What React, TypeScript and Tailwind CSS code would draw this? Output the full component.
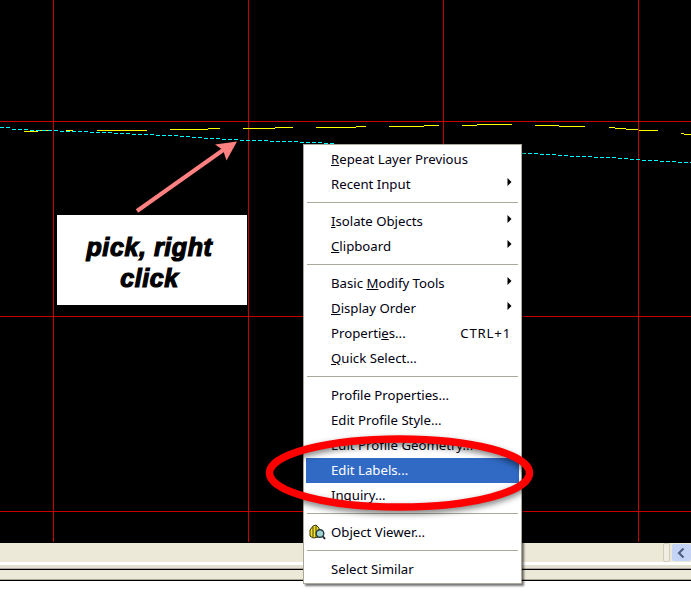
import React from "react";

const yellow: [number, number, number][] = [
  [24,38,131],[38,49,130],[66,73,130],[97,147,130],[170,208,129],[208,220,128],[243,275,128],[275,293,127],
  [316,356,127],[356,366,126],[389,424,126],[424,439,125],[462,477,125],[477,512,124],[535,559,125],[559,585,126],
  [609,615,127],[615,626,128],[626,638,129],[639,658,130],[681,684,133],[684,691,134],
];

const cyanPts: [number, number][] = [
  [0,127],[6,127],[8,129],[45,130],[75,131],[120,133],[185,136],[188,137],[250,140],[310,142],[327,143],[360,145],
  [522,153],[548,154],[570,156],[607,157],[632,159],[665,161],[691,162],
];
function cyanAt(x: number) {
  for (let i = 1; i < cyanPts.length; i++) {
    const [a, ya] = cyanPts[i - 1];
    const [b, yb] = cyanPts[i];
    if (x <= b) return Math.round(ya + ((yb - ya) * (x - a)) / (b - a));
  }
  return 162;
}
const cyanDashes: [number, number][] = [];
for (let x = 0; x < 691; x += 6) cyanDashes.push([x, cyanAt(x)]);

function Item({ children, arrow, shortcut, active, icon }: { children: React.ReactNode; arrow?: boolean; shortcut?: string; active?: boolean; icon?: React.ReactNode }) {
  return (
    <div className={`relative mx-[2px] flex h-[25px] items-center pl-[25px] pr-[8px] ${active ? "bg-[#316ac5] text-white" : "text-[#000010]"}`}>
      {icon}
      <span className="flex-1 whitespace-nowrap pt-[1px]">{children}</span>
      {shortcut && <span className="pt-[1px] tracking-[0.8px]">{shortcut}</span>}
      {arrow && (
        <svg width="5" height="8" viewBox="0 0 5 8" className="mb-[5px] mr-[-1px]">
          <path d="M0.5 0 L4.5 4 L0.5 8 Z" fill="#000" />
        </svg>
      )}
    </div>
  );
}

function Sep() {
  return (
    <div className="h-[12px] px-[3px] pt-[5px]">
      <div className="h-px bg-[#aca899]" />
    </div>
  );
}

export default function App() {
  return (
    <div className="relative h-[615px] w-[691px] overflow-hidden bg-white">
      <div className="relative h-[543px] bg-black">
        <svg width="691" height="543" className="block">
          <g stroke="#c80000" strokeWidth="1" shapeRendering="crispEdges">
            <line x1="53.5" y1="0" x2="53.5" y2="542" />
            <line x1="248.5" y1="0" x2="248.5" y2="542" />
            <line x1="443.5" y1="0" x2="443.5" y2="542" />
            <line x1="638.5" y1="0" x2="638.5" y2="542" />
            <line x1="0" y1="121.5" x2="691" y2="121.5" />
            <line x1="0" y1="316.5" x2="691" y2="316.5" />
            <line x1="0" y1="511.5" x2="691" y2="511.5" />
          </g>
          <g stroke="#ffff00" strokeWidth="1" shapeRendering="crispEdges">
            {yellow.map(([a, b, y], i) => (
              <line key={i} x1={a} x2={b} y1={y + 0.5} y2={y + 0.5} />
            ))}
          </g>
          <g stroke="#00ffff" strokeWidth="1" shapeRendering="crispEdges">
            {cyanDashes.map(([x, y], i) => (
              <line key={i} x1={x} x2={x + 4} y1={y + 0.5} y2={y + 0.5} />
            ))}
          </g>
        </svg>
      </div>

      <div className="relative h-[19px] bg-[#ece9d8]">
        <div className="absolute left-[663px] top-0 h-[19px] w-[7px] rounded-[2px] border border-[#cfccb8] bg-[#f0eee2]" />
        <div className="absolute left-[672px] top-px flex h-[17px] w-[19px] items-center justify-center rounded-[2px] bg-[#c3d4f7]">
          <svg width="9" height="10" viewBox="0 0 9 10">
            <path d="M6.5 0.5 L2 5 L6.5 9.5" fill="none" stroke="#4d6185" strokeWidth="2.2" />
          </svg>
        </div>
      </div>
      <div className="h-[3px] bg-white" />
      <div className="h-[3px] bg-[#e4e1d2]" />
      <div className="h-px bg-[#aca899]" />
      <div className="h-px bg-black" />
      <div className="h-[9px] bg-[#ece9d8]" />
      <div className="h-px bg-[#aca899]" />
      <div className="h-px bg-black" />

      <div className="absolute left-[57px] top-[215px] flex h-[90px] w-[190px] items-center justify-center bg-white pr-[5px] text-center font-['Liberation_Sans',sans-serif] text-[25px] font-bold italic leading-[31px] tracking-[0.6px] text-black [-webkit-text-stroke:1.2px_black]">
        <div className="w-[150px] pt-[6px]">pick, right click</div>
      </div>

      <svg width="691" height="615" className="pointer-events-none absolute left-0 top-0">
        <path d="M137 211 L226 148" stroke="#ff8080" strokeWidth="4" fill="none" />
        <path d="M237 141.5 L215 144.5 L223 150 L226.5 160.5 Z" fill="#ff8080" />
      </svg>

      <div className="absolute left-[303px] top-[144px] h-[440px] w-[219px] border border-[#aca899] bg-white pt-[2px] font-['Noto_Sans',sans-serif] text-[13.2px] shadow-[2px_2px_2px_rgba(0,0,0,0.55)]">
        <Item><u>R</u>epeat Layer Previous</Item>
        <Item arrow>Recent Input</Item>
        <Sep />
        <Item arrow><u>I</u>solate Objects</Item>
        <Item arrow><u>C</u>lipboard</Item>
        <Sep />
        <Item arrow>Basic <u>M</u>odify Tools</Item>
        <Item arrow><u>D</u>isplay Order</Item>
        <Item shortcut="CTRL+1">Properti<u>e</u>s...</Item>
        <Item><u>Q</u>uick Select...</Item>
        <Sep />
        <Item>Profile Properties...</Item>
        <Item>Edit Profile Style...</Item>
        <Item>Edit Profile Geometry...</Item>
        <Item active>Edit Labels...</Item>
        <Item>Inquiry...</Item>
        <Sep />
        <Item
          icon={
            <svg width="17" height="17" viewBox="0 0 17 17" className="absolute left-[3px] top-[4px]">
              <path d="M1 12 L1 6 L4 2 L7 1 L10 4 L10 13 L4 14 Z" fill="#f2e02a" stroke="#33330a" strokeWidth="1" />
              <path d="M4 3 L4 13 M7 2 L7 13" stroke="#4a4510" strokeWidth="1" fill="none" />
              <circle cx="11" cy="9.5" r="3.8" fill="#9fd0cc" stroke="#1f3a44" strokeWidth="1.4" />
              <path d="M14 12.5 L16 15" stroke="#222" strokeWidth="2" />
            </svg>
          }
        >
          Object Viewer...
        </Item>
        <Sep />
        <Item>Select Similar</Item>
      </div>

      <svg width="691" height="615" className="pointer-events-none absolute left-0 top-0">
        <ellipse cx="399.5" cy="476" rx="130" ry="34" fill="none" stroke="#000" strokeOpacity="0.55" strokeWidth="7" style={{ filter: "blur(3px)" }} />
        <ellipse cx="399.5" cy="473" rx="130" ry="34" fill="none" stroke="#ff0000" strokeWidth="7.5" />
      </svg>
    </div>
  );
}
